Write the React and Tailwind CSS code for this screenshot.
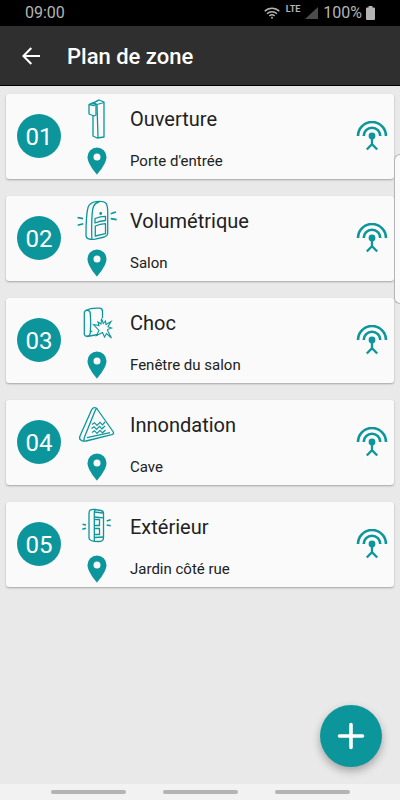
const ContactIcon = () => (
  <>
    <path d="M20 6v33l4 2 7-1V5l-5-2z" />
    <path d="M20 6l4 1.500 7-2M24 7.500l1 33M26 3l-6 3" />
    <path d="M16 7.500l3-1.500 4 1v11l-2 1-5-2z" fill="#fafafa" />
    <path d="M16 7.500l5 1 2-1.500" />
  </>
)

const MotionIcon = () => (
  <>
    <path d="M13 36.500C13 26 13.500 14 15 8.500 16.500 4.500 19 3.200 23 2.700c4-.5 8-.3 9.700 1.300 2 2 2 5 2 9v21c0 2.500-1 3.200-3.500 4l-9 2.200c-5 .8-9.200-.2-9.200-3.700z" />
    <path d="M18.800 40C18.500 28 18.700 15 20 9c1-3.500 2.500-5.300 6-6" />
    <path d="M22 19.500c3.500-1.500 7-2.200 10.500-2.200v4.200c-3.500.2-7 1-10.500 2.500zM22.300 27c3.300-1.500 6.700-2.200 10.200-2.300v10l-10.200 2.300z" />
    <circle cx="27.700" cy="14.500" r=".8" fill="currentColor" />
    <g strokeWidth="1.700">
      <path d="M4.500 18.500l5.500 1.200M4.700 26.300l5.600-1.600M37.700 14.700l5.300-1.700M37.700 19.700l6 1" />
    </g>
  </>
)

const ShockIcon = () => (
  <>
    <path d="M11.300 12c0-3 5-4 6 0 .5 6 .5 14 0 19.500-.5 5-6 4.500-6 1.500z" />
    <path d="M12.500 9.500c4-2 9-2.700 14-2.300 2.200.2 3 1 3 3V17M14 35.500l11-2M17.300 31l2-1" />
    <path
      strokeWidth="1.100"
      strokeLinejoin="miter"
      d="M28.500 17.500l1.800 5 2.200-2.500.5 3.500 5-3-3 5.200 3.500 1.300-4 1.500.5 2 3.500 6.500-5-4.500-2 3.500-2-4.500-6 3 2.500-5-5.500-6 5.500 1-1-3.500 3 2z"
    />
  </>
)

const FloodIcon = () => (
  <>
    <path d="M7 33L18.500 7c1.200-2.800 4.500-3.200 6-.5L40 28.500c1 1.500.6 2.600-1.200 3.100L13 38c-4.500.8-7.500-1.500-6-5z" />
    <path d="M11.500 38c-.8-.8-.8-2 0-4L22 8c.6-1.700 1.500-2.800 2.300-2.300M14 34.700l23-5" />
    <g strokeWidth="1.200" strokeLinejoin="miter">
      <path d="M19 21.500l2.500-1.800 2.500 2.600 3-3 2.500 2.500 2.500-2.800" />
      <path d="M18.500 25.500l2.500-1.800 2.500 2.600 3-3 2.500 2.500 3-2.800" />
      <path d="M19 29.500l2.500-1.800 2.500 2.600 3-3 2.500 2.500 3-2.800" />
    </g>
  </>
)

const OutdoorIcon = () => (
  <>
    <path d="M16 33V8c0-3 2-4 6-3.500l6 1c2 .3 2.500 1 2.500 3V33c0 2.500-2 3.500-5 3.500-5 0-9.500-.8-9.500-3.500z" />
    <path d="M21.300 36V7c0-1.500.5-2.300 1.500-2.500" />
    <path d="M21.500 12l9 .8M21.500 14.500h5v6h-5M21.500 23.500h5v6h-5M21.500 32.500l9-.5M21.500 7l8.500 1" />
    <g strokeWidth="1.500">
      <path d="M9.500 19.300l3.500.7M9.300 24.300l3.700-1M33.700 16l4-1.300M33.700 20l4 .7" />
    </g>
  </>
)

const zones = [
  { number: '01', type: 'Ouverture', place: "Porte d'entrée", Icon: ContactIcon },
  { number: '02', type: 'Volumétrique', place: 'Salon', Icon: MotionIcon },
  { number: '03', type: 'Choc', place: 'Fenêtre du salon', Icon: ShockIcon },
  { number: '04', type: 'Innondation', place: 'Cave', Icon: FloodIcon },
  { number: '05', type: 'Extérieur', place: 'Jardin côté rue', Icon: OutdoorIcon },
]

const PinIcon = () => (
  <svg viewBox="0 0 20 28" className="h-7 w-5" fill="currentColor" aria-hidden="true">
    <path
      fillRule="evenodd"
      d="M10 .5A9.500 9.500 0 0 0 .5 10C.5 17 10 27.500 10 27.500S19.500 17 19.500 10A9.500 9.500 0 0 0 10 .5zm0 6a3.500 3.500 0 1 1 0 7 3.500 3.500 0 0 1 0-7z"
    />
  </svg>
)

const AntennaIcon = () => (
  <svg viewBox="0 0 32 30" className="h-[30px] w-8 shrink-0 text-[#0c969c]" fill="none" stroke="currentColor" strokeWidth="2.600" aria-hidden="true">
    <path d="M2 15a14 14 0 0 1 28 0M7.700 15a8.300 8.300 0 0 1 16.600 0" />
    <circle cx="16" cy="15" r="3.400" fill="currentColor" stroke="none" />
    <path strokeWidth="2.300" d="M16 16v7.500M10.800 28.500L16 23.200l5.200 5.300" />
  </svg>
)

const StatusBar = () => (
  <div className="flex h-[26px] items-center bg-black pr-[25px] pl-[25px] text-base text-[#b4b4b4]">
    <span>09:00</span>
    <svg viewBox="0 0 16 12" className="mr-1.5 ml-auto h-3 w-4" fill="none" stroke="currentColor" strokeWidth="1.400" aria-hidden="true">
      <path d="M.7 4.200a10.500 10.500 0 0 1 14.600 0M3 6.700a7.200 7.200 0 0 1 10 0M5.300 9a4 4 0 0 1 5.400 0" />
      <circle cx="8" cy="10.800" r="1" fill="currentColor" stroke="none" />
    </svg>
    <span className="mr-[5px] mb-2 text-[9px] leading-none font-bold">LTE</span>
    <svg viewBox="0 0 13 12" className="mr-[5px] h-3 w-[13px]" fill="#4c4c4c" aria-hidden="true">
      <path d="M13 0v12H0z" />
    </svg>
    <span>100%</span>
    <svg viewBox="0 0 9 14" className="ml-1 h-3.5 w-[9px]" fill="currentColor" aria-hidden="true">
      <path d="M2.500 0h4v1.500H8a1 1 0 0 1 1 1V13a1 1 0 0 1-1 1H1a1 1 0 0 1-1-1V2.500a1 1 0 0 1 1-1h1.500z" />
    </svg>
  </div>
)

const ZoneCard = ({ zone }) => {
  const { number, type, place, Icon } = zone

  return (
    <li className="flex items-center rounded-[3px] bg-[#fafafa] pt-[3px] pr-1.5 pb-1 pl-[11px] shadow-[0_1px_2px_rgba(0,0,0,0.3)]">
      <span className="flex size-11 shrink-0 items-center justify-center rounded-full bg-[#0c969c] pt-0.5 text-2xl text-white">
        {number}
      </span>
      <div className="ml-3 grid flex-1 grid-cols-[48px_1fr] items-center gap-x-[9px] gap-y-1.5 text-[#0c969c]">
        <svg viewBox="0 0 48 44" className="h-11 w-12" fill="none" stroke="currentColor" strokeWidth="1.300" strokeLinejoin="round" aria-hidden="true">
          <Icon />
        </svg>
        <h2 className="text-xl text-[#212121]">{type}</h2>
        <div className="flex justify-center">
          <PinIcon />
        </div>
        <p className="text-[15px] text-[#212121]">{place}</p>
      </div>
      <AntennaIcon />
    </li>
  )
}

export default function App() {
  return (
    <div className="relative flex min-h-screen flex-col bg-[#e9e9e9] font-[Roboto,sans-serif]">
      <StatusBar />

      <header className="flex h-[60px] items-center border-b border-black bg-[#2f2f2f] pl-[22px] text-white">
        <button type="button" aria-label="Retour">
          <svg viewBox="0 0 18 18" className="size-[18px]" fill="none" stroke="currentColor" strokeWidth="2.100" aria-hidden="true">
            <path d="M18 9H1.500M9.300 1L1.400 9l7.900 8" />
          </svg>
        </button>
        <h1 className="ml-[27px] pt-0.5 text-[22px] font-medium">Plan de zone</h1>
      </header>

      <main className="flex-1 px-1.5 pt-2 pb-4">
        <ul className="flex flex-col gap-[17px]">
          {zones.map((zone) => (
            <ZoneCard key={zone.number} zone={zone} />
          ))}
        </ul>
      </main>

      {/* Edge panel handle */}
      <div className="absolute top-[154px] right-0 h-[150px] w-1.5 rounded-l-md border border-r-0 border-[#b5b5b5] bg-[#fafafa]" />

      <button
        type="button"
        aria-label="Ajouter une zone"
        className="fixed right-[18px] bottom-[33px] flex size-[62px] items-center justify-center rounded-full bg-[#0c969c] text-white shadow-[0_4px_8px_rgba(0,0,0,0.3)]"
      >
        <svg viewBox="0 0 28 28" className="size-7" stroke="currentColor" strokeWidth="3.600" strokeLinecap="round" aria-hidden="true">
          <path d="M14 2.500v23M2.500 14h23" />
        </svg>
      </button>

      {/* Gesture hints */}
      <nav className="flex h-4 items-center justify-center gap-[37px] bg-[#f2f2f2]">
        <span className="h-1 w-[75px] rounded-full bg-[#b3b3b3]" />
        <span className="h-1 w-[75px] rounded-full bg-[#b3b3b3]" />
        <span className="h-1 w-[75px] rounded-full bg-[#b3b3b3]" />
      </nav>
    </div>
  )
}
